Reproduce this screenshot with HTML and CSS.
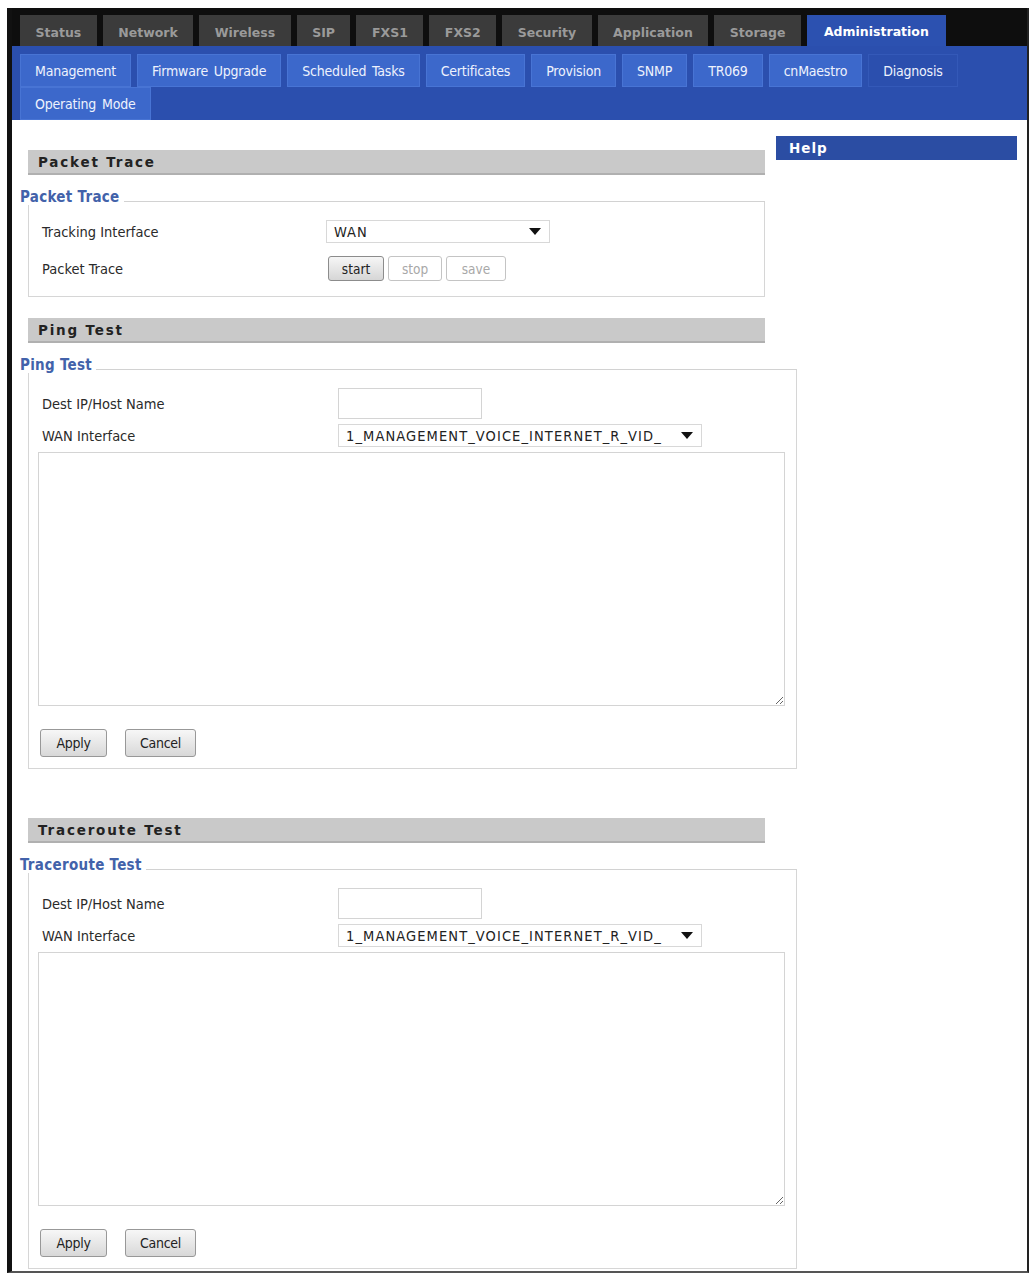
FILE: index.html
```html
<!DOCTYPE html>
<html>
<head>
<meta charset="utf-8">
<title>Diagnosis</title>
<link rel="stylesheet" href="styles.css">
</head>
<body>
<div class="frame">
  <div class="topnav">
    <div class="tab">Status</div>
    <div class="tab">Network</div>
    <div class="tab">Wireless</div>
    <div class="tab">SIP</div>
    <div class="tab">FXS1</div>
    <div class="tab">FXS2</div>
    <div class="tab">Security</div>
    <div class="tab">Application</div>
    <div class="tab">Storage</div>
    <div class="tab active">Administration</div>
  </div>
  <div class="subnav">
    <div class="subtab">Management</div>
    <div class="subtab">Firmware Upgrade</div>
    <div class="subtab">Scheduled Tasks</div>
    <div class="subtab">Certificates</div>
    <div class="subtab">Provision</div>
    <div class="subtab">SNMP</div>
    <div class="subtab">TR069</div>
    <div class="subtab">cnMaestro</div>
    <div class="subtab current">Diagnosis</div>
    <div class="subtab">Operating Mode</div>
  </div>
  <div class="main">
    <div class="content">
      <div class="bar">Packet Trace</div>
      <div class="group">
        <div class="group-title"><span>Packet Trace</span></div>
        <div class="group-body packet">
          <div class="row">
            <div class="label">Tracking Interface</div>
            <div class="select select-short"><span>WAN</span><svg class="caret" width="12" height="7" viewBox="0 0 12 7"><path d="M0 0H12L6 7Z" fill="#111"/></svg></div>
          </div>
          <div class="row row-gap">
            <div class="label">Packet Trace</div>
            <div class="btns">
              <button class="btn btn-active">start</button>
              <button class="btn btn-disabled">stop</button>
              <button class="btn btn-disabled btn-save">save</button>
            </div>
          </div>
        </div>
      </div>

      <div class="bar bar-ping">Ping Test</div>
      <div class="group wide">
        <div class="group-title"><span>Ping Test</span></div>
        <div class="group-body test">
          <div class="row">
            <div class="label label-wide">Dest IP/Host Name</div>
            <input class="text-input" type="text">
          </div>
          <div class="row row-small">
            <div class="label label-wide">WAN Interface</div>
            <div class="select select-long"><span>1_MANAGEMENT_VOICE_INTERNET_R_VID_</span><svg class="caret" width="12" height="7" viewBox="0 0 12 7"><path d="M0 0H12L6 7Z" fill="#111"/></svg></div>
          </div>
          <textarea class="output"></textarea>
          <div class="actions">
            <button class="action action-apply">Apply</button>
            <button class="action action-cancel">Cancel</button>
          </div>
        </div>
      </div>

      <div class="bar bar-trace">Traceroute Test</div>
      <div class="group wide">
        <div class="group-title"><span>Traceroute Test</span></div>
        <div class="group-body test">
          <div class="row">
            <div class="label label-wide">Dest IP/Host Name</div>
            <input class="text-input" type="text">
          </div>
          <div class="row row-small">
            <div class="label label-wide">WAN Interface</div>
            <div class="select select-long"><span>1_MANAGEMENT_VOICE_INTERNET_R_VID_</span><svg class="caret" width="12" height="7" viewBox="0 0 12 7"><path d="M0 0H12L6 7Z" fill="#111"/></svg></div>
          </div>
          <textarea class="output"></textarea>
          <div class="actions">
            <button class="action action-apply">Apply</button>
            <button class="action action-cancel">Cancel</button>
          </div>
        </div>
      </div>
    </div>
    <div class="help">Help</div>
  </div>
</div>
</body>
</html>
```

FILE: styles.css
```css
body {
  margin: 0;
  background: #fff;
  font-family: "DejaVu Sans Condensed", "Liberation Sans", sans-serif;
  font-size: 13px;
  color: #222;
}

.frame {
  margin: 8px 6px 0 7px;
  border-left: 5px solid #111;
  border-right: 2px solid #222;
  border-bottom: 2px solid #555;
  padding-bottom: 2px;
}

.topnav {
  background: #0e0e0e;
  height: 38px;
  box-sizing: border-box;
  padding: 7px 0 0 8px;
  display: flex;
  gap: 6px;
}

.tab {
  height: 31px;
  box-sizing: border-box;
  padding: 4px 15.5px 0;
  display: flex;
  align-items: center;
  background: #3b3b3b;
  color: #9a9a9a;
  font-family: "DejaVu Sans", sans-serif;
  font-weight: bold;
  font-size: 12.5px;
}

.tab.active {
  background: #2c51b0;
  color: #fff;
  padding: 2px 17px 0;
}

.subnav {
  background: #2b4fae;
  height: 74px;
  box-sizing: border-box;
  padding: 8px 8px 0 8px;
  display: flex;
  flex-wrap: wrap;
  align-content: flex-start;
  column-gap: 6px;
  overflow: hidden;
}

.subtab {
  height: 33px;
  box-sizing: border-box;
  padding: 0 14px;
  display: flex;
  align-items: center;
  background: #3c68cb;
  border: 1px solid #4874d4;
  color: #eef2fd;
  font-size: 14px;
  letter-spacing: -0.2px;
  word-spacing: 2px;
}

.subtab.current {
  background: #2b4fae;
  border-color: #3459b8;
}

.main {
  display: grid;
  grid-template-columns: 737px 241px;
  column-gap: 11px;
  padding-left: 16px;
  align-items: start;
}

.content {
  padding-top: 30px;
}

.help {
  margin-top: 16px;
  height: 24px;
  line-height: 24px;
  padding-left: 13px;
  background: #2b4da3;
  color: #fff;
  font-family: "DejaVu Sans", sans-serif;
  font-weight: bold;
  font-size: 13.5px;
  letter-spacing: 1px;
}

.bar {
  height: 25px;
  box-sizing: border-box;
  background: #c9c9c9;
  border-bottom: 2px solid #b0b0b0;
  padding-left: 10px;
  line-height: 24px;
  font-family: "DejaVu Sans", sans-serif;
  font-weight: bold;
  font-size: 13.5px;
  letter-spacing: 1.8px;
  color: #222;
}

.bar-ping {
  margin-top: 21px;
}

.bar-trace {
  margin-top: 49px;
}

.group-title {
  margin-top: 14px;
  margin-left: -8px;
  height: 16px;
  display: flex;
}

.group-title span {
  position: relative;
  z-index: 1;
  background: #fff;
  line-height: 16px;
  font-size: 15px;
  font-weight: bold;
  letter-spacing: 0.3px;
  color: #4262aa;
}

.group-title::after {
  content: "";
  flex: 1;
  align-self: flex-end;
  border-top: 1px solid #d2d2d2;
  margin: 0 0 3px 4px;
}

.group-body {
  margin-top: -4px;
  border: 1px solid #d6d6d6;
  border-top: none;
}

.group.wide {
  margin-right: -32px;
}

.packet {
  padding: 19px 0 15px 13px;
}

.test {
  padding: 19px 11px 11px 9px;
}

.row {
  display: flex;
  align-items: center;
  font-size: 14.5px;
  color: #2a2a2a;
}

.row-gap {
  margin-top: 13px;
}

.row-small {
  margin-top: 5px;
}

.label {
  width: 284px;
  flex: none;
}

.label-wide {
  width: 296px;
  padding-left: 4px;
}

.select {
  height: 23px;
  box-sizing: border-box;
  border: 1px solid #d8d8d8;
  display: flex;
  align-items: center;
  justify-content: space-between;
  padding: 0 8px 0 7px;
  font-size: 14.5px;
  letter-spacing: 1px;
  color: #222;
}

.select-short {
  width: 224px;
}

.select-long {
  width: 364px;
  letter-spacing: 1.1px;
}

.caret {
  display: block;
  flex: none;
}

.btns {
  display: flex;
  gap: 4px;
  margin-left: 2px;
}

.btn {
  height: 25px;
  width: 56px;
  box-sizing: border-box;
  border: 1px solid #c4c4c4;
  border-radius: 3px;
  background: #fff;
  font-family: "DejaVu Sans Condensed", "Liberation Sans", sans-serif;
  font-size: 13.5px;
  color: #333;
  padding: 0;
}

.btn-active {
  border-color: #8c8c8c;
  background: linear-gradient(#f6f6f6, #d6d6d6);
  color: #222;
}

.btn-disabled {
  width: 54px;
  color: #a8a8a8;
}

.btn-save {
  width: 60px;
}

.text-input {
  width: 144px;
  height: 31px;
  box-sizing: border-box;
  border: 1px solid #d4d4d4;
  margin: 0;
  padding: 0 4px;
  outline: none;
}

.output {
  display: block;
  width: 747px;
  height: 254px;
  box-sizing: border-box;
  margin: 5px 0 0 0;
  border: 1px solid #d4d4d4;
  resize: both;
  outline: none;
}

.actions {
  display: flex;
  gap: 18px;
  margin: 23px 0 0 2px;
}

.action {
  height: 28px;
  box-sizing: border-box;
  border: 1px solid #989898;
  border-radius: 3px;
  background: linear-gradient(#f7f7f7, #d8d8d8);
  font-family: "DejaVu Sans Condensed", "Liberation Sans", sans-serif;
  font-size: 14px;
  letter-spacing: -0.3px;
  color: #222;
  padding: 0;
}

.action-apply {
  width: 67px;
}

.action-cancel {
  width: 71px;
}
```
